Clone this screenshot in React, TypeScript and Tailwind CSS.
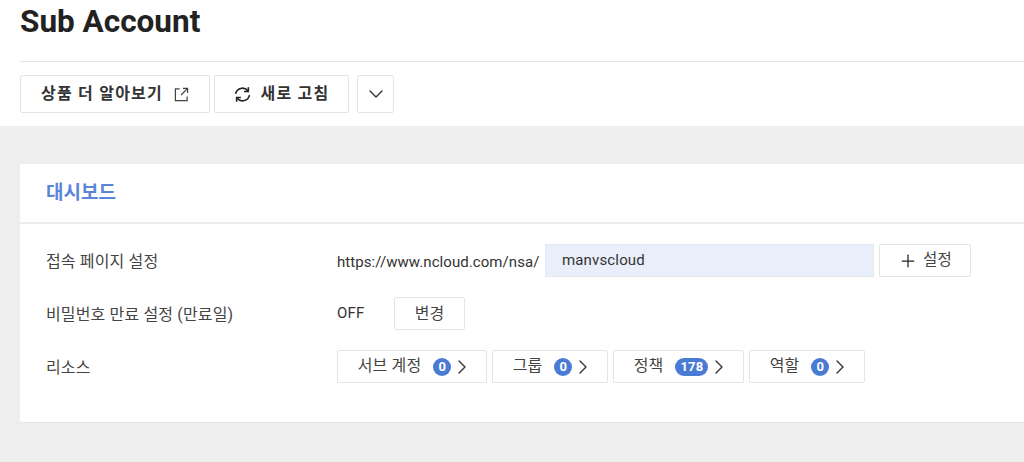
import React from 'react';
import { ChevronDown, ChevronRight, Plus } from 'lucide-react';

const font = "font-['Roboto','Noto_Sans_CJK_KR',sans-serif]";

function CountButton({ label, count, width }: { label: string; count: string; width: string }) {
  return (
    <button className={`${width} h-[33px] pl-[8px] flex items-center justify-center bg-white border border-[#e4e4e4] rounded-[2px] text-[16px] text-[#444]`}>
      <span className="pb-[2px]">{label}</span>
      <span className="ml-[12px] h-[18px] min-w-[18px] px-[5px] rounded-full bg-[#4a7bd4] text-white text-[13px] font-bold flex items-center justify-center">
        {count}
      </span>
      <ChevronRight className="-ml-[1px] w-[24px] h-[24px] text-[#333]" strokeWidth={1.4} />
    </button>
  );
}

export default function App() {
  return (
    <div className={`${font} w-[1024px] h-[462px] overflow-hidden bg-[#eeeeee]`}>
      <div className="bg-white h-[126px] pl-[20px]">
        <h1 className="h-[62px] pt-[3px] text-[31.5px] leading-[38px] font-bold text-[#222] border-b border-[#e4e4e4]">Sub Account</h1>
        <div className="flex pt-[13px]">
          <button className="w-[190px] h-[38px] flex items-center justify-center bg-white border border-[#e4e4e4] rounded-[2px] text-[16px] tracking-[1.2px] font-bold text-[#333]">
            <span>상품 더 알아보기</span>
            <svg className="ml-[11px] w-[15px] h-[15px] text-[#444]" viewBox="0 0 16 16" fill="none" stroke="currentColor" strokeWidth={1.3}>
              <path d="M6 2H1.5v12.5H14V10" />
              <path d="M9.5 1.5h5v5" />
              <path d="M14.5 1.5L7.5 8.5" />
            </svg>
          </button>
          <button className="ml-[4px] w-[135px] h-[38px] flex items-center justify-center bg-white border border-[#e4e4e4] rounded-[2px] text-[16px] tracking-[1.2px] font-bold text-[#333]">
            <svg className="mr-[10px] w-[17px] h-[17px] text-[#222]" viewBox="0 0 16 16" fill="none" stroke="currentColor" strokeWidth={1.5}>
              <path d="M1.5 7.5A6.5 6.5 0 0 1 13 4.5" />
              <path d="M13.5 1.2V5.2H9.5" />
              <path d="M14.5 8.5A6.5 6.5 0 0 1 3 11.5" />
              <path d="M2.5 14.8V10.8H6.5" />
            </svg>
            <span>새로 고침</span>
          </button>
          <button className="ml-[8px] w-[37px] h-[38px] flex items-center justify-center bg-white border border-[#e4e4e4] rounded-[2px]">
            <ChevronDown className="w-[24px] h-[24px] text-[#333]" strokeWidth={1.4} />
          </button>
        </div>
      </div>

      <div className="mt-[38px] ml-[20px] bg-white h-[259px] rounded-l-[2px] border-b border-[#e4e4e4]">
        <div className="h-[60px] pl-[26px] flex items-center border-b-2 border-[#ececec] text-[19px] font-bold text-[#5b86d8]">대시보드</div>
        <div className="pt-[20px] pl-[26px] text-[16px] tracking-[0.15px] text-[#444]">
          <div className="flex items-center h-[33px]">
            <div className="w-[291px] pt-[3px]">접속 페이지 설정</div>
            <span className="w-[208px] pt-[3px] text-[15px] tracking-[0.07px] text-[#333]">https://www.ncloud.com/nsa/</span>
            <div className="w-[329px] h-[33px] flex items-center pl-[16px] bg-[#e9effa] border border-[#e4e8ef] text-[#333] text-[15px]">manvscloud</div>
            <button className="ml-[5px] w-[92px] h-[33px] flex items-center justify-center bg-white border border-[#e4e4e4] rounded-[2px] text-[15.5px]">
              <Plus className="mr-[5px] w-[20px] h-[20px] text-[#222]" strokeWidth={1.5} />
              <span>설정</span>
            </button>
          </div>
          <div className="flex items-center h-[33px] mt-[20px]">
            <div className="w-[291px] pt-[2px]">비밀번호 만료 설정 (만료일)</div>
            <span className="w-[57px] text-[15px] text-[#333]">OFF</span>
            <button className="w-[71px] h-[33px] bg-white border border-[#e4e4e4] rounded-[2px]">변경</button>
          </div>
          <div className="flex items-center h-[33px] mt-[20px]">
            <div className="w-[291px] pt-[2px]">리소스</div>
            <div className="flex gap-[5px]">
              <CountButton label="서브 계정" count="0" width="w-[150px]" />
              <CountButton label="그룹" count="0" width="w-[116px]" />
              <CountButton label="정책" count="178" width="w-[131px]" />
              <CountButton label="역할" count="0" width="w-[116px]" />
            </div>
          </div>
        </div>
      </div>
    </div>
  );
}
